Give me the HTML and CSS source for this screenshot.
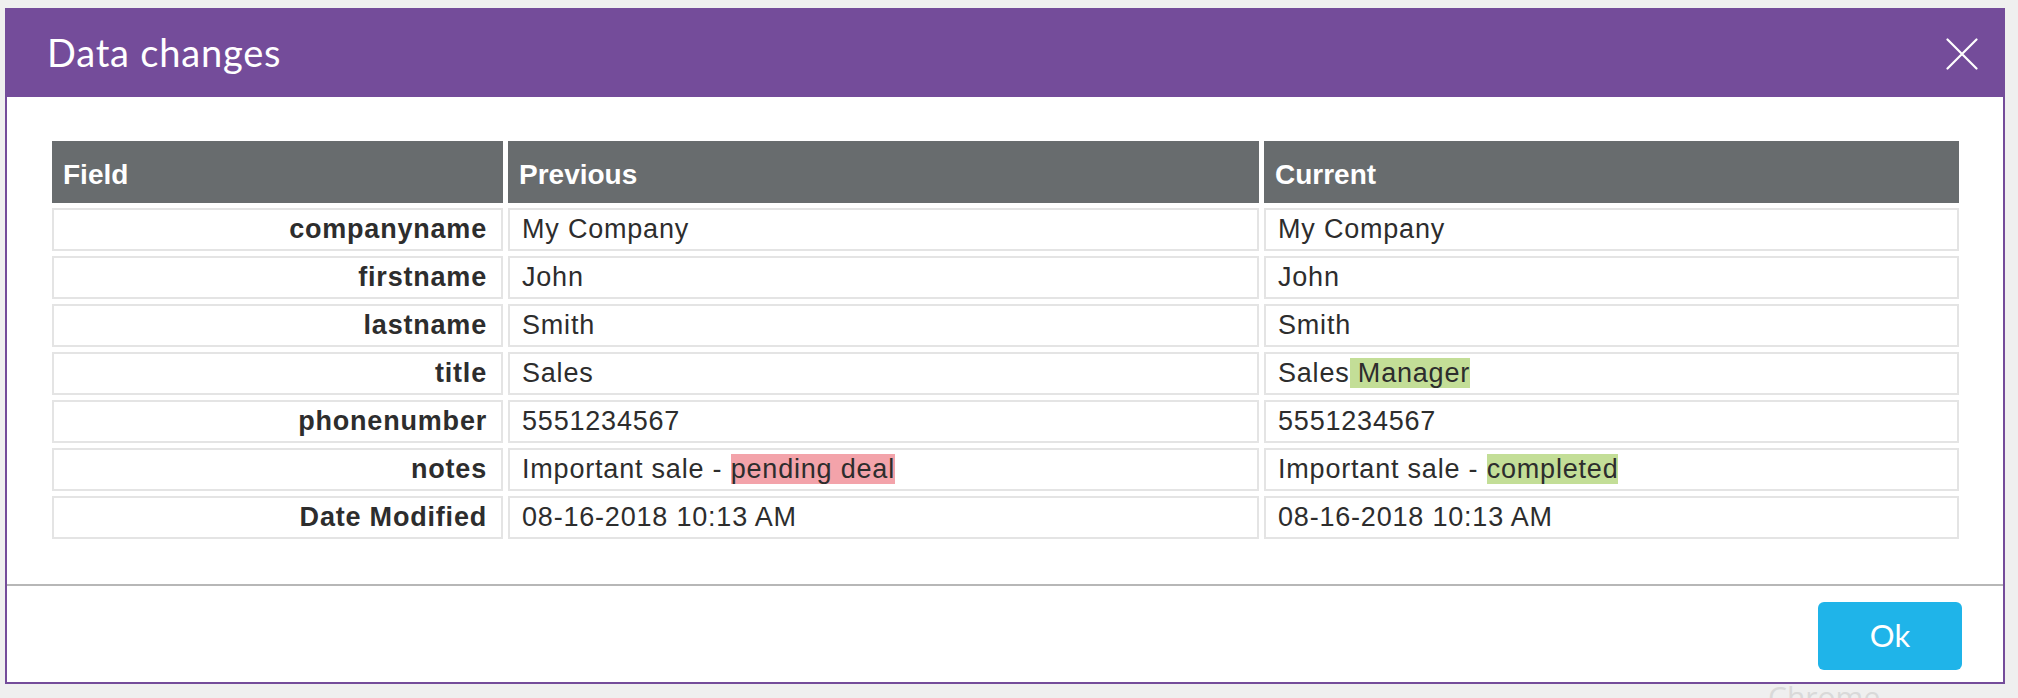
FILE: index.html
```html
<!DOCTYPE html>
<html lang="en">
<head>
<meta charset="utf-8">
<title>Data changes</title>
<link rel="stylesheet" href="styles.css">
</head>
<body>
<div class="dialog">
  <div class="dialog-header">
    <h1 class="dialog-title">Data changes</h1>
    <button class="close" type="button" aria-label="Close">
      <svg width="32" height="32" viewBox="0 0 32 32"><path d="M1.5 1.5 L30.5 30.5 M30.5 1.5 L1.5 30.5" stroke="#ffffff" stroke-width="2.2" stroke-linecap="round" fill="none"/></svg>
    </button>
  </div>
  <div class="dialog-body">
    <table class="changes">
      <colgroup>
        <col class="col-field">
        <col class="col-prev">
        <col class="col-cur">
      </colgroup>
      <thead>
        <tr><th>Field</th><th>Previous</th><th>Current</th></tr>
      </thead>
      <tbody>
        <tr><td class="name">companyname</td><td>My Company</td><td>My Company</td></tr>
        <tr><td class="name">firstname</td><td>John</td><td>John</td></tr>
        <tr><td class="name">lastname</td><td>Smith</td><td>Smith</td></tr>
        <tr><td class="name">title</td><td>Sales</td><td>Sales<span class="added"> Manager</span></td></tr>
        <tr><td class="name">phonenumber</td><td>5551234567</td><td>5551234567</td></tr>
        <tr><td class="name">notes</td><td>Important sale - <span class="removed">pending deal</span></td><td>Important sale - <span class="added">completed</span></td></tr>
        <tr><td class="name">Date Modified</td><td>08-16-2018 10:13 AM</td><td>08-16-2018 10:13 AM</td></tr>
      </tbody>
    </table>
  </div>
  <div class="dialog-footer">
    <button class="ok" type="button">Ok</button>
  </div>
</div>
<div class="backdrop-text">Chrome</div>
</body>
</html>
```

FILE: styles.css
```css
html, body {
  margin: 0;
  padding: 0;
}
body {
  background: #efefef;
  width: 2018px;
  height: 698px;
  overflow: hidden;
  position: relative;
  font-family: "Liberation Sans", Arial, sans-serif;
}
.dialog {
  position: relative;
  z-index: 1;
  margin: 8px 0 0 5px;
  width: 2000px;
  box-sizing: border-box;
  background: #ffffff;
  border: 2px solid #744c9a;
  border-top: 0;
}
.dialog-header {
  height: 89px;
  margin: 0 -2px;
  background: #744c9a;
  display: flex;
  align-items: center;
  justify-content: space-between;
  padding: 0 27px 0 42px;
}
.dialog-title {
  margin: 0;
  font-family: Lato, "Open Sans", sans-serif;
  font-weight: 400;
  font-size: 38px;
  line-height: 46px;
  letter-spacing: 0.8px;
  color: #ffffff;
  padding-bottom: 2px;
}
.close {
  border: 0;
  padding: 0;
  margin: 3px 0 0 0;
  background: transparent;
  width: 32px;
  height: 32px;
  display: block;
}
.close svg {
  display: block;
}
.dialog-body {
  padding: 39px 39px 40px 40px;
}
.changes {
  table-layout: fixed;
  width: 1917px;
  border-collapse: separate;
  border-spacing: 5px;
  color: #2d2d2d;
}
.col-field { width: 451px; }
.col-prev { width: 751px; }
.col-cur { width: 695px; }
.changes th {
  background: #686c6e;
  color: #ffffff;
  font-weight: 700;
  font-size: 28px;
  line-height: 32px;
  text-align: left;
  padding: 18px 11px 12px 11px;
}
.changes td {
  border: 2px solid #e4e4e4;
  font-size: 27px;
  line-height: 31px;
  letter-spacing: 0.8px;
  padding: 4px 12px 4px 12px;
  white-space: nowrap;
}
.changes td.name {
  font-weight: 700;
  text-align: right;
  padding-right: 14px;
}
.added {
  background: #c3de97;
}
.removed {
  background: #f3a3aa;
}
.dialog-footer {
  border-top: 2px solid #b7b7b7;
  height: 98px;
  box-sizing: border-box;
  display: flex;
  justify-content: flex-end;
  align-items: flex-start;
  padding: 16px 41px 0 0;
}
.ok {
  width: 144px;
  height: 68px;
  border: 0;
  border-radius: 6px;
  background: #1fb4e9;
  color: #ffffff;
  font-family: Lato, "Open Sans", sans-serif;
  font-size: 31px;
  font-weight: 400;
  padding: 0 0 2px 0;
}
.backdrop-text {
  position: absolute;
  left: 1768px;
  top: 676px;
  font-family: "Open Sans", sans-serif;
  font-size: 30px;
  color: #d9d9d9;
  z-index: 0;
}
```
